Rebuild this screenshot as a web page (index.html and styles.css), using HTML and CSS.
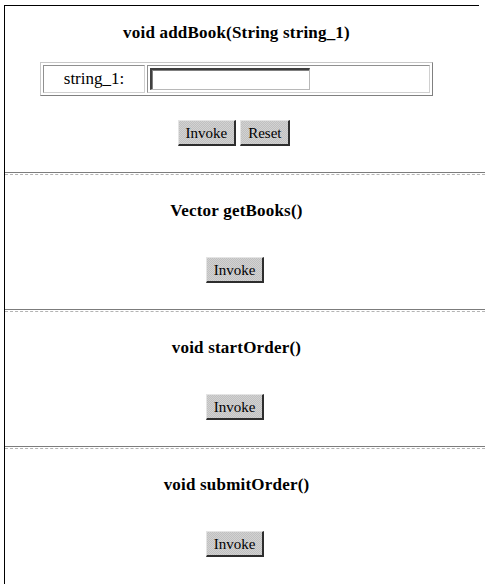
FILE: index.html
```html
<!DOCTYPE html>
<html>
<head>
<meta charset="utf-8">
<title>Web Service Tester</title>
<link rel="stylesheet" href="styles.css">
</head>
<body>
<div class="page">
  <section class="method first">
    <h2 class="sig">void addBook(String string_1)</h2>
    <form class="call">
      <table class="params">
        <tr>
          <td class="label">string_1:</td>
          <td class="field"><input type="text" class="text-in"></td>
        </tr>
      </table>
      <div class="actions">
        <button type="button" class="btn">Invoke</button>
        <button type="reset" class="btn">Reset</button>
      </div>
    </form>
  </section>
  <div class="rule"></div>
  <section class="method">
    <h2 class="sig">Vector getBooks()</h2>
    <div class="actions single">
      <button type="button" class="btn">Invoke</button>
    </div>
  </section>
  <div class="rule"></div>
  <section class="method">
    <h2 class="sig">void startOrder()</h2>
    <div class="actions single">
      <button type="button" class="btn">Invoke</button>
    </div>
  </section>
  <div class="rule"></div>
  <section class="method">
    <h2 class="sig">void submitOrder()</h2>
    <div class="actions single">
      <button type="button" class="btn">Invoke</button>
    </div>
  </section>
</div>
</body>
</html>
```

FILE: styles.css
```css
html, body {
  margin: 0;
  padding: 0;
  background: #fff;
}

body {
  font-family: "Liberation Serif", "Times New Roman", serif;
  color: #000;
  overflow: hidden;
}

.page {
  margin: 5px 0 0 4px;
  padding-top: 1px;
  border-left: 1px solid #000;
  min-height: calc(100vh - 6px);
  background-image: linear-gradient(#000, #000);
  background-repeat: no-repeat;
  background-origin: border-box;
  background-position: -1px 0;
  background-size: 476px 1px;
}

.method {
  width: 463px;
  padding: 26px 0 26px;
  text-align: center;
}

.method.first {
  padding-top: 17px;
}

.sig {
  margin: 0;
  font-size: 17px;
  line-height: 20px;
  font-weight: bold;
  letter-spacing: 0.2px;
}

.call {
  margin: 0;
}

.params {
  width: 393px;
  margin: 19px auto 0 35px;
  border-collapse: separate;
  border-spacing: 2px;
  border: 1px solid;
  border-color: #c8c8c8 #808080 #808080 #c8c8c8;
  font-size: 17px;
}

.params td {
  border: 1px solid;
  border-color: #909090 #d0d0d0 #d0d0d0 #909090;
  height: 22px;
  padding: 2px 1px;
}

.params .label {
  width: 98px;
  text-align: center;
}

.params .field {
  text-align: left;
  padding-left: 2px;
}

.text-in {
  display: block;
  box-sizing: border-box;
  width: 160px;
  height: 22px;
  margin: 0;
  padding: 0 3px;
  border-style: solid;
  border-width: 2px 1px 1px 2px;
  border-color: #404040 #b8b8b8 #b8b8b8 #404040;
  box-shadow: inset 1px 1px 0 #808080;
  background: #fff;
  font: 14px "Liberation Sans", Arial, sans-serif;
}

.actions {
  display: flex;
  justify-content: center;
  gap: 4px;
  margin-top: 24px;
  padding-right: 5px;
}

.actions.single {
  margin-top: 36px;
  padding-right: 3px;
}

.btn {
  box-sizing: border-box;
  height: 26px;
  margin: 0;
  padding: 0 7px;
  border-style: solid;
  border-width: 1px 2px 2px 1px;
  border-color: #e4e4e4 #2e2e2e #2e2e2e #e4e4e4;
  background-color: #c8c8c8;
  background-image: repeating-conic-gradient(#c0c0c0 0 25%, #d2d2d2 0 50%);
  background-size: 2px 2px;
  font-family: "Liberation Serif", "Times New Roman", serif;
  font-size: 15px;
  line-height: 20px;
  color: #000;
  cursor: default;
}

.rule {
  height: 1px;
  border-top: 1px solid #7c7c7c;
  border-bottom: 1px dashed #b4b4b4;
}
```
